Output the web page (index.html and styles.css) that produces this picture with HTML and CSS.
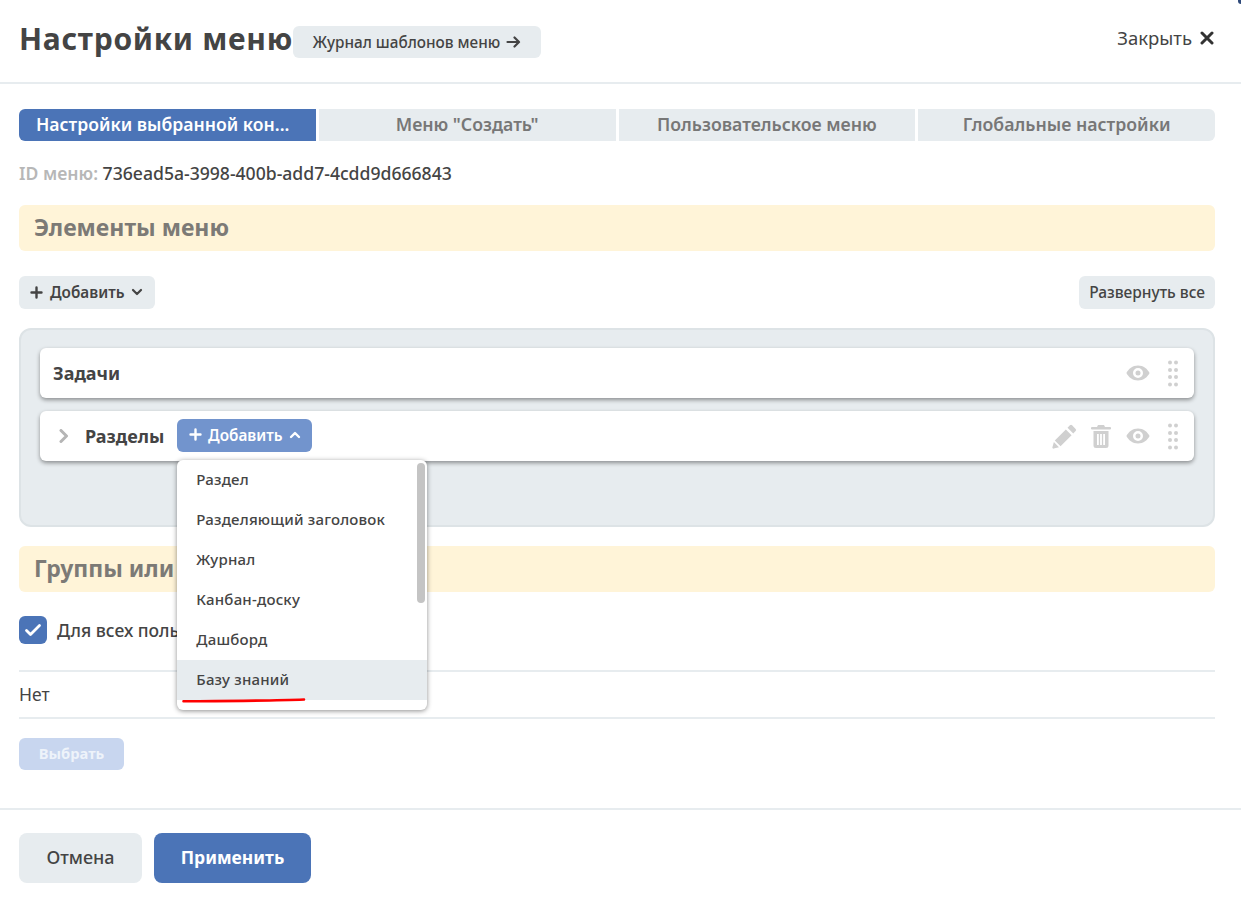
FILE: index.html
```html
<!DOCTYPE html>
<html lang="ru">
<head>
    <meta charset="UTF-8">
    <title>Настройки меню</title>
    <link rel="stylesheet" href="styles.css">
</head>
<body>
    <div class="modal">
        <div class="corner-mark"></div>
        <header class="modal-header">
            <div class="header-left">
                <h1>Настройки меню</h1>
                <a class="journal-btn">Журнал шаблонов меню
                    <svg width="15" height="12" viewBox="0 0 15 12"><path d="M1.500 6h11M8.500 1.500 13 6l-4.500 4.500" fill="none" stroke="#444" stroke-width="2.200" stroke-linecap="round" stroke-linejoin="round"/></svg>
                </a>
            </div>
            <a class="close-btn">Закрыть
                <svg width="14" height="14" viewBox="0 0 14 14"><path d="M2 2l10 10M12 2 2 12" fill="none" stroke="#333" stroke-width="3" stroke-linecap="round"/></svg>
            </a>
        </header>

        <div class="modal-body">
            <div class="tabs">
                <div class="tab active">Настройки выбранной кон...</div>
                <div class="tab">Меню "Создать"</div>
                <div class="tab">Пользовательское меню</div>
                <div class="tab">Глобальные настройки</div>
            </div>

            <div class="menu-id"><span class="id-label">ID меню:</span> 736ead5a-3998-400b-add7-4cdd9d666843</div>

            <h2 class="band">Элементы меню</h2>

            <div class="toolbar">
                <button class="small-btn">
                    <svg width="13" height="13" viewBox="0 0 13 13"><path d="M6.500 1.500v10M1.500 6.500h10" stroke="#444" stroke-width="2.400" stroke-linecap="round"/></svg>
                    Добавить
                    <svg width="12" height="8" viewBox="0 0 12 8"><path d="M2 2l4 4 4-4" fill="none" stroke="#444" stroke-width="2.200" stroke-linecap="round" stroke-linejoin="round"/></svg>
                </button>
                <button class="small-btn expand-btn">Развернуть все</button>
            </div>

            <div class="tree">
                <div class="card">
                    <span class="card-title">Задачи</span>
                    <div class="card-icons">
                        <svg class="eye" width="24" height="16" viewBox="0 0 24 16"><path fill-rule="evenodd" d="M12 .5C6.600.5 2.400 4 .4 8c2 4 6.200 7.500 11.600 7.500S21.600 12 23.600 8C21.600 4 17.400.5 12 .5ZM12 3a5 5 0 1 1 0 10 5 5 0 0 1 0-10Zm0 2.500a2.500 2.500 0 1 0 0 5 2.500 2.500 0 0 0 0-5Z"/></svg>
                        <svg class="grip" width="10" height="27" viewBox="0 0 10 27"><circle cx="2" cy="2.500" r="2"/><circle cx="8" cy="2.500" r="2"/><circle cx="2" cy="10" r="2"/><circle cx="8" cy="10" r="2"/><circle cx="2" cy="17" r="2"/><circle cx="8" cy="17" r="2"/><circle cx="2" cy="24.500" r="2"/><circle cx="8" cy="24.500" r="2"/></svg>
                    </div>
                </div>
                <div class="card">
                    <svg class="chevron" width="10" height="14" viewBox="0 0 10 14"><path d="M2 1.500 7.500 7 2 12.500" fill="none" stroke="#b5b5b5" stroke-width="3" stroke-linecap="round" stroke-linejoin="round"/></svg>
                    <span class="card-title">Разделы</span>
                    <div class="add-wrap">
                        <button class="small-btn add-open">
                            <svg width="13" height="13" viewBox="0 0 13 13"><path d="M6.500 1.500v10M1.500 6.500h10" stroke="#fff" stroke-width="2.400" stroke-linecap="round"/></svg>
                            Добавить
                            <svg width="12" height="8" viewBox="0 0 12 8"><path d="M2 6l4-4 4 4" fill="none" stroke="#fff" stroke-width="2.400" stroke-linecap="round" stroke-linejoin="round"/></svg>
                        </button>
                        <div class="dropdown">
                            <div class="dd-item">Раздел</div>
                            <div class="dd-item">Разделяющий заголовок</div>
                            <div class="dd-item">Журнал</div>
                            <div class="dd-item">Канбан-доску</div>
                            <div class="dd-item">Дашборд</div>
                            <div class="dd-item hover">Базу знаний</div>
                            <div class="dd-scroll"></div>
                            <svg class="underline" width="124" height="6" viewBox="0 0 124 6"><path d="M1.500 4.300C40 4 90 3.800 122 2.500" fill="none" stroke="#f00" stroke-width="2.600" stroke-linecap="round"/></svg>
                        </div>
                    </div>
                    <div class="card-icons">
                        <svg class="pencil" width="25" height="25" viewBox="0 0 24 24"><path d="M17.200 1.300a1.500 1.500 0 0 1 2.100 0l3.400 3.400a1.500 1.500 0 0 1 0 2.100l-2.300 2.300-5.500-5.500ZM13.300 5.200l5.500 5.500L8.200 21.300l-5.500-5.500ZM1.800 17.300l4.900 4.900-5 1.400a1 1 0 0 1-1.300-1.300Z"/></svg>
                        <svg class="trash" width="20" height="23" viewBox="0 0 20 23"><path fill-rule="evenodd" d="M7 0h6l1 2h5a1 1 0 0 1 0 2.500H1A1 1 0 0 1 1 2h5ZM2.500 6h15v14.500a2.500 2.500 0 0 1-2.500 2.500H5a2.500 2.500 0 0 1-2.500-2.500ZM6 9v11h1.800V9Zm3.100 0v11h1.800V9Zm3.100 0v11H14V9Z"/></svg>
                        <svg class="eye" width="24" height="16" viewBox="0 0 24 16"><path fill-rule="evenodd" d="M12 .5C6.600.5 2.400 4 .4 8c2 4 6.200 7.500 11.600 7.500S21.600 12 23.600 8C21.600 4 17.400.5 12 .5ZM12 3a5 5 0 1 1 0 10 5 5 0 0 1 0-10Zm0 2.500a2.500 2.500 0 1 0 0 5 2.500 2.500 0 0 0 0-5Z"/></svg>
                        <svg class="grip" width="10" height="27" viewBox="0 0 10 27"><circle cx="2" cy="2.500" r="2"/><circle cx="8" cy="2.500" r="2"/><circle cx="2" cy="10" r="2"/><circle cx="8" cy="10" r="2"/><circle cx="2" cy="17" r="2"/><circle cx="8" cy="17" r="2"/><circle cx="2" cy="24.500" r="2"/><circle cx="8" cy="24.500" r="2"/></svg>
                    </div>
                </div>
            </div>

            <h2 class="band groups">Группы или</h2>

            <label class="check-row">
                <span class="checkbox">
                    <svg width="18" height="14" viewBox="0 0 18 14"><path d="M2.500 7.500 6.500 11.500 15.500 2.500" fill="none" stroke="#fff" stroke-width="2.800" stroke-linecap="round" stroke-linejoin="round"/></svg>
                </span>
                Для всех поль
            </label>

            <div class="none-row">Нет</div>

            <button class="choose-btn">Выбрать</button>
        </div>

        <footer class="modal-footer">
            <button class="btn cancel">Отмена</button>
            <button class="btn apply">Применить</button>
        </footer>
    </div>
</body>
</html>
```
FILE: styles.css
```css
* {
    box-sizing: border-box;
}
body {
    margin: 0;
    background-color: #fff;
    font-family: "Noto Sans", "Open Sans", sans-serif;
    color: #444;
}
button {
    font-family: inherit;
    border: none;
    cursor: pointer;
}
.modal {
    position: relative;
    width: 1241px;
    height: 905px;
    overflow: hidden;
}
.corner-mark {
    position: absolute;
    top: 0;
    right: 0;
    width: 3px;
    height: 4px;
    background-color: #2f4a7a;
    border-bottom-left-radius: 3px;
}
.modal-header {
    height: 84px;
    padding: 0 27px 3px 19px;
    display: flex;
    align-items: center;
    justify-content: space-between;
    border-bottom: 2px solid #e7ecef;
}
.header-left {
    display: flex;
    align-items: center;
}
h1 {
    margin: 0 0 2px;
    font-size: 30px;
    line-height: 40px;
    font-weight: 700;
    letter-spacing: 0.7px;
    color: #444;
    width: 274px;
    white-space: nowrap;
}
.journal-btn {
    display: flex;
    align-items: center;
    justify-content: center;
    gap: 6px;
    width: 248px;
    height: 32px;
    margin-top: 5px;
    background-color: #e7ecef;
    border-radius: 6px;
    font-size: 15.300px;
    font-weight: 500;
}
.close-btn {
    display: flex;
    align-items: center;
    gap: 8px;
    font-size: 18.500px;
    margin-bottom: 4px;
}
.modal-body {
    padding: 25px 26px 0 19px;
    height: 724px;
}
.tabs {
    display: grid;
    grid-template-columns: repeat(4, 1fr);
    gap: 3px;
    height: 32px;
}
.tab {
    min-width: 0;
    padding-bottom: 2px;
    background-color: #e7ecef;
    color: #777;
    font-size: 17.700px;
    font-weight: 600;
    display: flex;
    align-items: center;
    justify-content: center;
    white-space: nowrap;
}
.tab:first-child {
    border-radius: 6px 0 0 6px;
}
.tab:last-child {
    border-radius: 0 6px 6px 0;
}
.tab.active {
    justify-content: flex-start;
    padding-left: 17px;
    font-size: 17.600px;
    background-color: #4b74b7;
    color: #fff;
}
.menu-id {
    margin-top: 20px;
    height: 24px;
    line-height: 24px;
    font-size: 17.600px;
    font-weight: 500;
}
.id-label {
    color: #b7b7b7;
    font-weight: 600;
}
.band {
    margin: 0;
    height: 46px;
    line-height: 45px;
    padding-left: 15px;
    background-color: #fff4d8;
    border-radius: 6px;
    color: #7c7a76;
    font-size: 23px;
    font-weight: 700;
}
.menu-id + .band {
    margin-top: 20px;
}
.toolbar {
    display: flex;
    justify-content: space-between;
    margin-top: 25px;
}
.small-btn {
    display: flex;
    align-items: center;
    gap: 7px;
    height: 33px;
    padding: 0 12px 1px 11px;
    background-color: #e7ecef;
    border-radius: 6px;
    color: #444;
    font-size: 15.300px;
    font-weight: 600;
}
.expand-btn {
    padding: 0 10px 2px;
    font-size: 15.500px;
    font-weight: 500;
}
.tree {
    margin-top: 19px;
    height: 199px;
    padding: 18px 19px;
    background-color: #e7ecef;
    border: 2px solid #dde3e6;
    border-radius: 12px;
}
.card {
    height: 50px;
    background-color: #fff;
    border-radius: 6px;
    box-shadow: 0 2px 4px rgba(0, 0, 0, 0.4);
    display: flex;
    align-items: center;
    padding: 0 13px;
    margin-bottom: 13px;
}
.card-title {
    font-size: 18px;
    font-weight: 700;
}
.chevron {
    margin: 0 16px 0 6px;
}
.card-icons {
    margin-left: auto;
    display: flex;
    align-items: center;
    gap: 14px;
    fill: #d0d0d0;
}
.card-icons .eye {
    margin-left: 1px;
}
.card-icons .grip {
    margin-left: 4px;
    margin-right: 3px;
}
.add-wrap {
    position: relative;
    margin-left: 13px;
    height: 33px;
    margin-top: -2px;
}
.add-open {
    background-color: #7294cd;
    color: #fff;
    width: 135px;
    justify-content: center;
    gap: 6px;
    padding: 0 0 1px;
}
.dropdown {
    position: absolute;
    top: 41px;
    left: 0;
    width: 250px;
    height: 250px;
    background-color: #fff;
    border-radius: 6px;
    box-shadow: 0 1px 5px rgba(0, 0, 0, 0.45);
    z-index: 5;
}
.dd-item {
    height: 40px;
    line-height: 38px;
    padding-left: 19px;
    font-size: 15px;
    font-weight: 500;
    letter-spacing: 0.2px;
}
.dd-item.hover {
    background-color: #e7ecef;
}
.dd-scroll {
    position: absolute;
    top: 3px;
    right: 2px;
    width: 8px;
    height: 140px;
    background-color: #c4c4c4;
    border-radius: 4px;
}
.underline {
    position: absolute;
    left: 5px;
    top: 237px;
}
.groups {
    margin-top: 19px;
}
.check-row {
    display: flex;
    align-items: center;
    gap: 10px;
    margin-top: 24px;
    height: 28px;
    font-size: 17.500px;
    font-weight: 500;
    white-space: nowrap;
}
.checkbox {
    width: 28px;
    height: 28px;
    background-color: #4b74b7;
    border-radius: 6px;
    display: flex;
    align-items: center;
    justify-content: center;
}
.none-row {
    margin-top: 26px;
    height: 49px;
    line-height: 44px;
    font-size: 17.500px;
    border-top: 2px solid #e7ecef;
    border-bottom: 2px solid #e7ecef;
}
.choose-btn {
    display: block;
    margin-top: 19px;
    width: 105px;
    height: 32px;
    padding-bottom: 4px;
    background-color: #c8d6ef;
    color: #eef3fa;
    border-radius: 6px;
    font-size: 14.700px;
    font-weight: 700;
}
.modal-footer {
    height: 97px;
    border-top: 2px solid #e7ecef;
    padding: 23px 19px 0;
    display: flex;
    gap: 12px;
    align-items: flex-start;
}
.btn {
    height: 50px;
    padding-bottom: 3px;
    border-radius: 8px;
    font-size: 18px;
}
.cancel {
    width: 123px;
    background-color: #e7ecef;
    color: #444;
    font-weight: 500;
}
.apply {
    width: 157px;
    font-size: 17.500px;
    background-color: #4b74b7;
    color: #fff;
    font-weight: 700;
}
```
